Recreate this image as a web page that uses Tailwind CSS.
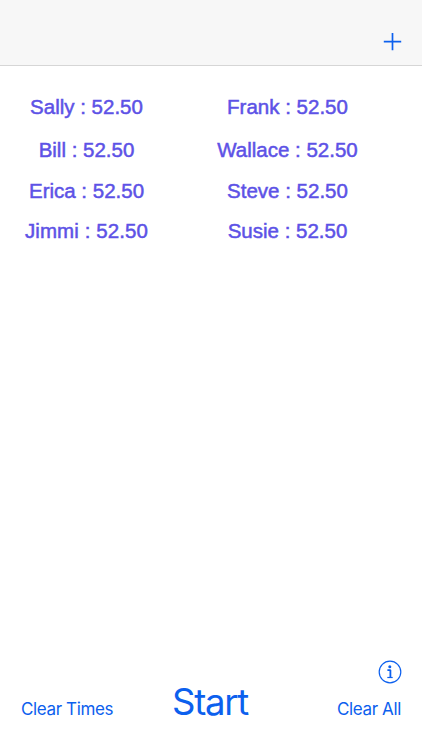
<!DOCTYPE html>
<html lang="en">
<head>
  <meta charset="UTF-8" />
  <meta name="viewport" content="width=device-width, initial-scale=1.0" />
  <title>Timers</title>
  <script src="https://cdn.jsdelivr.net/npm/@tailwindcss/browser@4"></script>
</head>
<body class="bg-white">
  <div class="flex flex-col h-[750px] w-[422px] overflow-hidden">

    <!-- Nav bar -->
    <header class="h-[66px] shrink-0 flex justify-end items-end pr-5 pb-[14px] bg-[#f7f7f7] border-b border-[#d6d6d6]">
      <button aria-label="Add timer">
        <svg class="block w-[19px] h-[19px]" viewBox="0 0 19 19" fill="none" stroke="#0c60ee" stroke-width="1.7">
          <path d="M9.5 .9v17.4M.8 9.7h17.4" />
        </svg>
      </button>
    </header>

    <!-- Timers -->
    <main class="flex-1 pt-[27px] font-['Liberation_Sans',sans-serif] text-[20.5px] leading-7 text-[#5d52e6] text-center whitespace-nowrap [-webkit-text-stroke:0.5px_#5d52e6]">
      <div class="grid grid-cols-[173px_229px]">
        <div class="h-[43px]">Sally : 52.50</div>
        <div class="h-[43px]">Frank : 52.50</div>
        <div class="h-[41px]">Bill : 52.50</div>
        <div class="h-[41px]">Wallace : 52.50</div>
        <div class="h-10">Erica : 52.50</div>
        <div class="h-10">Steve : 52.50</div>
        <div class="tracking-[0.1px]">Jimmi : 52.50</div>
        <div>Susie : 52.50</div>
      </div>
    </main>

    <!-- Bottom controls -->
    <footer class="px-[21px] pb-[21px] font-[Inter,sans-serif] text-[#0c60ee]">
      <div class="flex justify-end">
        <svg class="block w-6 h-6 -mr-[1px]" viewBox="0 0 24 24" fill="none" stroke="#0c60ee">
          <circle cx="12" cy="12" r="10.8" stroke-width="1.2" />
          <circle cx="11.8" cy="6.8" r="1.5" fill="#0c60ee" stroke="none" />
          <path d="M9.4 10.1h3v7.4" stroke-width="1.8" stroke-linejoin="bevel" />
          <path d="M9.3 17.5h5.4" stroke-width="1.2" />
        </svg>
      </div>
      <div class="flex justify-between items-baseline h-[45px] whitespace-nowrap">
        <button class="w-[100px] text-left text-[17px] tracking-[-0.37px]">Clear Times</button>
        <button class="pr-[2px] text-[36.5px] leading-[36px] tracking-[-1.25px]">Start</button>
        <button class="w-[100px] text-right text-[17px] tracking-[-0.37px]">Clear All</button>
      </div>
    </footer>

  </div>
</body>
</html>
